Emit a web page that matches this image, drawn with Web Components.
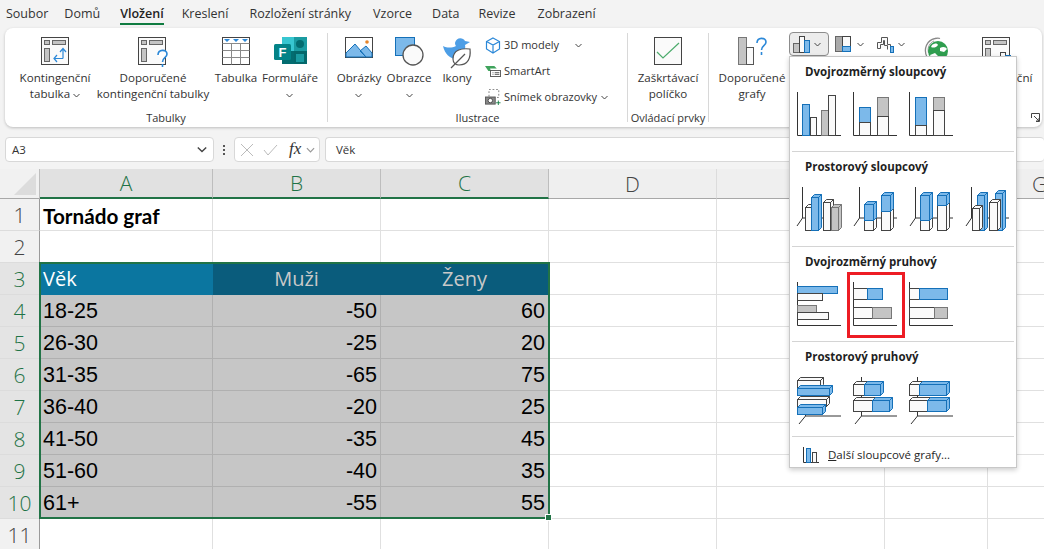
<!DOCTYPE html>
<html lang="cs"><head><meta charset="utf-8"><style>
html,body{margin:0;padding:0;width:1044px;height:549px;overflow:hidden;background:#f3f3f3;font-family:"Open Sans","Noto Sans",sans-serif}
</style></head><body>
<xl-app></xl-app>
<script>
const ui='"Open Sans","Noto Sans",sans-serif';
const chev=(c='#444',w=7,h=5)=>`<svg width="${w}" height="${h}" viewBox="0 0 7 5"><path d="M.5 1 3.500 4 6.500 1" fill="none" stroke="${c}" stroke-width="1"/></svg>`;
const I={
pivot:`<svg width="29" height="29" viewBox="0 0 29 29"><rect x=".5" y=".5" width="27" height="27" fill="#fafafa" stroke="#444"/><rect x="3.500" y="3.500" width="5" height="4" fill="#c4c4c4" stroke="#666"/><rect x="11.500" y="3.500" width="13" height="4" fill="#c4c4c4" stroke="#666"/><rect x="3.500" y="11.500" width="5" height="13" fill="#c4c4c4" stroke="#666"/><path d="M22 21.500H13M16 18l-3 3.500 3 3.500M22 21.500V12M19 15l3-3.500 3 3.500" fill="none" stroke="#2b88d8" stroke-width="1.200"/></svg>`,
rec:`<svg width="30" height="32" viewBox="0 0 30 32"><rect x=".5" y=".5" width="27" height="27" fill="#fafafa" stroke="#444"/><rect x="3.500" y="3.500" width="5" height="4" fill="#c4c4c4" stroke="#666"/><rect x="11.500" y="3.500" width="13" height="4" fill="#c4c4c4" stroke="#666"/><rect x="3.500" y="11.500" width="5" height="13" fill="#c4c4c4" stroke="#666"/><path d="M20 18c0-6 9-6 9-1 0 4-4.500 3.500-4.500 8" fill="#fff" stroke="#2b88d8" stroke-width="1.600"/><path d="M24.500 27v3" stroke="#2b88d8" stroke-width="1.600"/></svg>`,
table:`<svg width="29" height="29" viewBox="0 0 29 29"><rect x=".5" y=".5" width="27" height="27" fill="#fff" stroke="#444"/><path d="M.5 6.500h27M.5 13.500h27M.5 20.500h27M9.500 6.500v21M18.500 6.500v21" stroke="#8a8a8a" fill="none"/><path d="M2 2h6L5 5zM11 2h6l-3 3zM20 2h6l-3 3z" fill="#2b88d8"/></svg>`,
forms:`<svg width="33" height="28" viewBox="0 0 33 28"><rect x="8" y="0" width="13" height="14" fill="#37c6d0"/><rect x="8" y="14" width="13" height="13" fill="#036c70"/><rect x="20" y="0" width="13" height="14" fill="#1a9ba1"/><circle cx="26" cy="7" r="4" fill="#036c70"/><rect x="20" y="14" width="13" height="13" fill="#04686b"/><rect x="22" y="17" width="8" height="8" fill="#1a9ba1"/><rect x="0" y="7" width="17" height="16" rx="1.500" fill="#038387"/><text x="4.500" y="20" font-family="Liberation Sans,sans-serif" font-size="13" font-weight="700" fill="#fff">F</text></svg>`,
pic:`<svg width="28" height="22" viewBox="0 0 28 22"><rect x=".5" y=".5" width="27" height="20" fill="#fff" stroke="#444"/><path d="M1 16 10 7l11 13H1zM15 14l6-5 6 7v4h-6z" fill="#7cb9ea" stroke="#1570b8"/><circle cx="22" cy="5" r="1.800" fill="#e8862a"/></svg>`,
shapes:`<svg width="29" height="29" viewBox="0 0 29 29"><rect x=".5" y=".5" width="19" height="18" fill="#7cb9ea" stroke="#1570b8"/><circle cx="18" cy="18" r="10" fill="#fafafa" stroke="#555" stroke-width="1.300"/></svg>`,
icons:`<svg width="30" height="32" viewBox="0 0 30 32"><path d="M1 9c2 9 7 11 11 13l6-5c4-2 6-5 5-9l5-3-5-1c-2-4-9-4-10 2 0 2 1 3 1 3C10 11 5 11 1 9z" fill="#4d9ee6"/><path d="M28 12c-9-1-17 1-17 10 0 4 3 6 6 6 9 0 12-7 11-16z" fill="#fff" stroke="#555" stroke-width="1.200"/><path d="M9 31 23 17" stroke="#555" stroke-width="1.200"/></svg>`,
d3:`<svg width="16" height="17" viewBox="0 0 16 17"><path d="M8 1 14.500 4.500V12L8 16 1.500 12V4.500zM1.500 4.500 8 8l6.500-3.500M8 8v8" fill="none" stroke="#2b88d8" stroke-width="1.200"/></svg>`,
smart:`<svg width="16" height="12" viewBox="0 0 19 14"><path d="M0 1h11l3 3H6l1 3H4z" fill="#3fa35c"/><rect x="6.500" y="6.500" width="12" height="7" fill="#fff" stroke="#444"/><path d="M9 9h1M9 11h1M11.500 9H17M11.500 11H17" stroke="#444"/></svg>`,
snap:`<svg width="16" height="16" viewBox="0 0 18 18"><rect x="4.500" y=".5" width="11" height="9" fill="none" stroke="#777" stroke-dasharray="2 2"/><rect x=".5" y="9" width="11" height="8" fill="#888" stroke="#555"/><circle cx="6" cy="13" r="2.500" fill="#fff" stroke="#444"/><path d="M15 13v5M12.500 15.500h5" stroke="#107c41"/></svg>`,
check:`<svg width="28" height="28" viewBox="0 0 28 28"><rect x=".5" y=".5" width="27" height="27" fill="#fafafa" stroke="#444"/><path d="M3 15l6 6L25 6" fill="none" stroke="#4cab6c" stroke-width="1.200"/></svg>`,
recchart:`<svg width="29" height="29" viewBox="0 0 29 29"><rect x=".5" y=".5" width="8" height="27" fill="#c4c4c4" stroke="#777"/><rect x="8.500" y="10.500" width="7" height="17" fill="#fafafa" stroke="#555"/><path d="M19 6c0-6 9-6 9-1 0 4-4.500 3.500-4.500 8" fill="none" stroke="#2b88d8" stroke-width="1.600"/><path d="M23.500 15v3" stroke="#2b88d8" stroke-width="1.600"/></svg>`,
col:`<svg width="20" height="17" viewBox="0 0 20 17"><rect x=".5" y="7.500" width="6" height="9" fill="#c4c4c4" stroke="#666"/><rect x="6.500" y=".5" width="5" height="16" fill="#fafafa" stroke="#444"/><rect x="11.500" y="4.500" width="5" height="12" fill="#7cb9ea" stroke="#1570b8"/></svg>`,
hier:`<svg width="17" height="17" viewBox="0 0 17 17"><rect x=".5" y=".5" width="7" height="15" fill="#aaa" stroke="#666"/><rect x="7.500" y=".5" width="8" height="10" fill="#fafafa" stroke="#444"/><rect x="7.500" y="10.500" width="8" height="5" fill="#7cb9ea" stroke="#1570b8"/></svg>`,
water:`<svg width="18" height="17" viewBox="0 0 18 17"><path d="M.5 12.500V6.500h4V1.500h6V8.500h3v3" fill="#fafafa" stroke="#555"/><path d="M.5 12.500h3V8.500h3V4.500h1V9.500h3v4" fill="none" stroke="#555"/><rect x="13.500" y="10.500" width="3" height="6" fill="#7cb9ea" stroke="#1570b8"/></svg>`,
globe:`<svg width="25" height="25" viewBox="0 0 25 25"><path d="M3 20C-1 12 3 3 11 1.500c2-.5 4-.5 5 0" fill="none" stroke="#888" stroke-width="1.300"/><path d="M4.500 16C3 10 6 5.500 10 4" fill="none" stroke="#999"/><circle cx="14" cy="14" r="10" fill="#2f9e4f"/><path d="M8 8c3-2 5-2 6 0-2 3-5 3-7 2zM16 11c3-2 6-1 7 1l-3 3-4-1zM6 18l5-2 3 3-2 4c-3 0-5-2-6-5zM17 20l3-1 0 3-3 1z" fill="#fff"/></svg>`,
pivotchart:`<svg width="30" height="30" viewBox="0 0 30 30"><rect x=".5" y=".5" width="27" height="27" fill="#fafafa" stroke="#444"/><rect x="3.500" y="3.500" width="5" height="4" fill="#c4c4c4" stroke="#666"/><rect x="11.500" y="3.500" width="13" height="4" fill="#c4c4c4" stroke="#666"/><rect x="3.500" y="11.500" width="5" height="13" fill="#c4c4c4" stroke="#666"/><rect x="18.500" y="15.500" width="5" height="12" fill="#fafafa" stroke="#444"/><rect x="23.500" y="18.500" width="5" height="9" fill="#7cb9ea" stroke="#1570b8"/></svg>`
};
const B='#7cb9ea',BS='#1570b8',G='#c4c4c4',GS='#777',W='#fafafa',WS='#444';
const r=(x,y,w,h,f,s)=>`<rect x="${x+.5}" y="${y+.5}" width="${w}" height="${h}" fill="${f}" stroke="${s}"/>`;
const ax2=`<path d="M.5 0V43.500H44" fill="none" stroke="#333"/>`;
const ch=(s)=>`<svg width="46" height="44" viewBox="0 0 46 44" style="display:block;overflow:visible">${s}</svg>`;
const bx=(x,y,w,h,f,s,d=3)=>{x+=.5;y+=.5;return `<path d="M${x} ${y}l${d} ${-d}h${w}l${-d} ${d}z" fill="${f}" stroke="${s}"/><path d="M${x+w} ${y}l${d} ${-d}v${h}l${-d} ${d}z" fill="${f}" stroke="${s}"/><rect x="${x}" y="${y}" width="${w}" height="${h}" fill="${f}" stroke="${s}"/>`};
const axC=(x)=>`<path d="M${x+.5} 0V31H${x+38}M${x+.5} 31 ${x-5} 39" fill="none" stroke="#333"/>`;
const axB=(x)=>`<path d="M${x+.5} 0V39H44M${x+.5} 39 ${x-6} 47" fill="none" stroke="#333"/>`;
const thumbs={
c2:[ch(ax2+r(5,12,7,31,B,BS)+r(13,25,6,18,W,WS)+r(24,18,7,25,G,GS)+r(31,3,7,40,W,WS)),
 ch(ax2+r(6,15,11,15,B,BS)+r(6,30,11,13,W,WS)+r(24,5,11,19,G,GS)+r(24,24,11,19,W,WS)),
 ch(ax2+r(6,5,11,28,B,BS)+r(6,33,11,10,W,WS)+r(24,5,11,13,G,GS)+r(24,18,11,25,W,WS))],
c3:[ch(axC(5)+bx(8,20,6,23,W,WS)+bx(14,10,7,33,B,BS)+bx(26,15,7,28,W,WS)+bx(34,20,7,23,G,GS)),
 ch(axC(6)+bx(11,33,9,10,W,WS)+bx(11,17,9,16,B,BS)+bx(28,24,9,19,W,WS)+bx(28,8,9,16,B,BS)),
 ch(axC(6)+bx(11,33,9,10,W,WS)+bx(11,8,9,25,B,BS)+bx(28,18,9,25,W,WS)+bx(28,8,9,10,B,BS)),
 ch(axC(6)+bx(12,8,7,35,B,BS)+bx(30,6,7,37,B,BS)+bx(7,21,7,22,W,WS)+bx(24,15,8,28,W,WS))],
b2:[ch(ax2+r(0,4,40,7,B,BS)+r(0,11,25,7,W,WS)+r(0,23,19,7,G,GS)+r(0,30,31,7,W,WS)),
 ch(ax2+r(0,6,14,11,W,WS)+r(14,6,15,11,B,BS)+r(0,25,19,11,W,WS)+r(19,25,19,11,G,GS)),
 ch(ax2+r(0,6,10,11,W,WS)+r(10,6,28,11,B,BS)+r(0,25,25,11,W,WS)+r(25,25,13,11,G,GS))],
b3:[ch(axB(8)+bx(0,3,23,7,W,WS)+bx(0,11,32,7,B,BS)+bx(0,22,29,7,W,WS)+bx(0,30,25,7,B,BS)),
 ch(axB(8)+bx(0,7,11,11,W,WS)+bx(11,7,16,11,B,BS)+bx(0,23,19,11,W,WS)+bx(19,23,17,11,B,BS)),
 ch(axB(8)+bx(0,7,10,11,W,WS)+bx(10,7,27,11,B,BS)+bx(0,23,18,11,W,WS)+bx(18,23,19,11,B,BS))]
};
class Base extends HTMLElement{
 constructor(){super();this.attachShadow({mode:'open'});}
 set html(v){this.shadowRoot.innerHTML=v;}
}
class XlTabs extends Base{connectedCallback(){
 const t=['Soubor','Domů','Vložení','Kreslení','Rozložení stránky','Vzorce','Data','Revize','Zobrazení'];
 const m=[16,20,18,21,22,20,19,22,0];
 this.html=`<style>:host{display:flex;flex:none;height:28px;padding-left:6px;font:12.500px ${ui};color:#333;box-sizing:border-box}
 span{display:block;line-height:27px;position:relative;white-space:nowrap}
 .on{font-weight:600;color:#222}.on::after{content:"";position:absolute;left:0;right:0;top:23px;height:2px;background:#107c41}</style>`+
 t.map((x,i)=>`<span class="${i==2?'on':''}" style="margin-right:${m[i]}px">${x}</span>`).join('');
}}
class XlBtn extends Base{connectedCallback(){
 const w=this.getAttribute('w')||60,pl=this.getAttribute('pl')||0;
 this.html=`<style>:host{display:flex;flex-direction:column;align-items:center;box-sizing:border-box;width:${w}px;padding-left:${pl}px;flex:none;font:11.600px/16px ${ui};color:#333;text-align:center;white-space:nowrap}
 .i{height:33px;margin-top:5px;display:flex;align-items:flex-start;justify-content:center}
 </style><div class="i"><slot name="i"></slot></div><div><slot></slot></div>`;
}}
class XlGroup extends Base{connectedCallback(){
 const launcher=this.hasAttribute('launcher')?`<svg style="position:absolute;right:2px;bottom:4px" width="9" height="9" viewBox="0 0 9 9"><path d="M.5 5V.5H8.500V8.500H5M3 3l5 5M8 5v3H5" fill="none" stroke="#444"/></svg>`:'';
 this.html=`<style>:host{display:flex;flex-direction:column;flex:none;position:relative;height:94px;width:${this.getAttribute('w')}px;box-sizing:border-box;margin-top:4px;font:11px/16px ${ui};color:#333}
 :host(:not([nob]))::after{content:"";position:absolute;right:0;top:1px;bottom:4px;width:1px;background:#d8d8d8}
 .c{display:flex;flex:1;padding-left:${this.getAttribute('pl')||0}px;min-height:0}.l{text-align:center;height:16px;white-space:nowrap;padding-right:1px}</style>
 <div class="c"><slot></slot></div><div class="l">${this.getAttribute('label')||''}</div>${launcher}`;
}}
class XlRibbon extends Base{connectedCallback(){
 const c=chev();
 const ic=k=>`<span slot="i">${I[k]}</span>`;
 this.html=`<style>:host{display:flex;flex:none;margin:0 2px 0 5px;height:99px;background:#fff;border-radius:8px;box-shadow:0 1px 3px rgba(0,0,0,.22);font:11.600px/16px ${ui};color:#333}
 .mini{display:flex;flex-direction:column;gap:8px;margin-top:4px;width:140px;flex:none;padding-left:2px}.m{display:flex;align-items:center;height:18px;white-space:nowrap}
 .w{width:19px;flex:none;display:flex;align-items:center}
 .smb{height:24px;box-sizing:border-box;display:flex;align-items:center;border-radius:4px;flex:none;padding-left:6px}
 .smb.on{background:#ececec;border:1px solid #8c8c8c;padding-left:3px}</style>
 <xl-group w="323" label="Tabulky" pl="10">
  <xl-btn w="80">${ic('pivot')}Kontingenční<br>tabulka ${c}</xl-btn>
  <xl-btn w="116">${ic('rec')}Doporučené<br>kontingenční tabulky</xl-btn>
  <xl-btn w="50">${ic('table')}Tabulka</xl-btn>
  <xl-btn w="58">${ic('forms')}Formuláře<br>${c}</xl-btn>
 </xl-group>
 <xl-group w="300" label="Ilustrace" pl="3">
  <xl-btn w="56">${ic('pic')}Obrázky<br>${c}</xl-btn>
  <xl-btn w="44">${ic('shapes')}Obrazce<br>${c}</xl-btn>
  <xl-btn w="52">${ic('icons')}Ikony</xl-btn>
  <div class="mini">
   <div class="m"><span class="w">${I.d3}</span><span>3D modely</span><span style="margin-left:16px;display:flex">${c}</span></div>
   <div class="m"><span class="w">${I.smart}</span><span>SmartArt</span></div>
   <div class="m"><span class="w">${I.snap}</span><span style="margin-right:4px">Snímek obrazovky</span>${c}</div>
  </div>
 </xl-group>
 <xl-group w="81" label="Ovládací prvky">
  <xl-btn w="80">${ic('check')}Zaškrtávací<br>políčko</xl-btn>
 </xl-group>
 <xl-group w="333" nob launcher>
  <xl-btn w="80" pl="6">${ic('recchart')}Doporučené<br>grafy</xl-btn>
  <div class="smb on" style="width:40px">${I.col}<span style="margin-left:1px;display:flex">${c}</span></div>
  <div class="smb" style="width:42px">${I.hier}<span style="margin-left:5px;display:flex">${c}</span></div>
  <div class="smb" style="width:44px">${I.water}<span style="margin-left:3px;display:flex">${c}</span></div>
  <div style="width:25px;margin:5px 0 0 9px;flex:none">${I.globe}</div>
  <xl-btn w="80" style="margin-left:8px">${ic('pivotchart')}Kontingenční<br>graf</xl-btn>
 </xl-group>`;
}}
class XlFormula extends Base{connectedCallback(){
 this.html=`<style>:host{display:flex;flex:none;align-items:center;height:25px;margin:10px 0 7px 5px;font:11.500px ${ui};color:#333}
 .b{background:#fff;border:1px solid #d8d8d8;border-radius:4px;height:25px;box-sizing:border-box;display:flex;align-items:center;flex:none}
 .n{width:209px;padding:0 6px;justify-content:space-between}.dots{width:20px;flex:none}
 .dots i{display:block;width:2px;height:2px;background:#555;margin:2px auto}
 .f{width:86px;padding-left:5px}.v{flex:1;margin-left:5px;padding-left:10px;border-right:0;min-width:0}
 .fx{font:italic 400 17px "Liberation Serif",serif;color:#333;margin:0 5px 2px 11px;line-height:20px}</style>
 <div class="b n"><span>A3</span>${chev('#444',10,7)}</div>
 <div class="dots"><i></i><i></i><i></i></div>
 <div class="b f"><svg width="14" height="14" viewBox="0 0 14 14"><path d="M1 1l12 12M13 1 1 13" stroke="#bbb" fill="none"/></svg><svg style="margin-left:9px" width="15" height="12" viewBox="0 0 15 12"><path d="M1 6l4 5 9-10" stroke="#bbb" fill="none"/></svg><span class="fx">fx</span>${chev('#999',9,6)}</div>
 <div class="b v">Věk</div>`;
}}
class XlCell extends Base{connectedCallback(){
 this.html=`<style>:host{display:flex;align-items:center;box-sizing:border-box;padding:2px 3px 0;border-right:1px solid #e0e0e0;border-bottom:1px solid #e0e0e0;font:21.500px "Liberation Sans",sans-serif;color:#000;white-space:nowrap;min-width:0;background:#fff;overflow:hidden}
 :host([sel]){background:#c6c6c6;border-color:#b0b0b0}
 :host([r]){justify-content:flex-end}:host([cen]){justify-content:center}
 :host([hd]){font:20px ${ui};background:#0b76a0;color:#fff;border-color:#0b76a0;padding-top:0;box-shadow:inset 0 1px #fff}
 :host([hd2]){font:20px ${ui};background:#0a5c7c;color:#c9c9c9;border-color:#0a5c7c;padding-top:0;box-shadow:inset 0 1px #fff}
 :host([b]){font:700 20.700px "Lato","Open Sans",sans-serif}</style><slot></slot>`;
}}
class XlHead extends Base{connectedCallback(){
 this.html=`<style>:host{display:flex;align-items:center;justify-content:center;box-sizing:border-box;color:#444;font:21px ${ui};font-weight:300}
 :host([col]){background:#efefef;border-right:1px solid #dcdcdc;border-bottom:1px solid #a8a8a8}
 :host([row]){background:#f1f1f1;border-right:1px solid #9a9a9a;border-bottom:1px solid #dcdcdc}
 :host([a]){background:#e4e4e4;color:#1f7346}
 :host([ac]){background:#e1e1e1;margin-top:0;border-right:1px solid #bdbdbd;border-bottom:2px solid #217346;padding-top:0}
 :host([corner]){background:#f1f1f1;border-right:1px solid #bdbdbd;border-bottom:1px solid #a8a8a8;align-items:flex-start;justify-content:flex-start}svg{display:block}</style><slot></slot>`;
}}
class XlSheet extends Base{connectedCallback(){
 const data=[['18-25','-50','60'],['26-30','-25','20'],['31-35','-65','75'],['36-40','-20','25'],['41-50','-35','45'],['51-60','-40','35'],['61+','-55','55']];
 const cols=['A','B','C','D','E','F','G'];
 let h=`<xl-head corner><svg style="margin:4px 0 0 14px" width="22" height="22" viewBox="0 0 22 22"><path d="M22 0V22H0z" fill="#dcdcdc"/></svg></xl-head>`;
 cols.forEach((c,i)=>{h+=`<xl-head col ${i<3?'a ac':''}>${c}</xl-head>`});
 const blank=n=>'<xl-cell></xl-cell>'.repeat(n);
 for(let r=1;r<=11;r++){
  const act=r>=3&&r<=10;
  h+=`<xl-head row ${act?'a':''}>${r}</xl-head>`;
  if(r==1)h+=`<xl-cell b>Tornádo graf</xl-cell>`+blank(6);
  else if(r==3)h+=`<xl-cell hd>Věk</xl-cell><xl-cell hd2 cen>Muži</xl-cell><xl-cell hd2 cen>Ženy</xl-cell>`+blank(4);
  else if(r>=4&&r<=10){const d=data[r-4];h+=`<xl-cell sel>${d[0]}</xl-cell><xl-cell sel r>${d[1]}</xl-cell><xl-cell sel r>${d[2]}</xl-cell>`+blank(4);}
  else h+=blank(7);
 }
 this.html=`<style>:host{display:grid;flex:none;position:relative;grid-template-columns:40px 173px 168px 168px 168px 168px 103px 104px;grid-template-rows:30px repeat(11,32px);background:#fff;width:1092px}
 .sel{position:absolute;left:39px;top:93px;width:511px;height:257px;box-sizing:border-box;border:2px solid #217346;pointer-events:none}
 .sel::after{content:"";position:absolute;right:-4px;bottom:-4px;width:5px;height:5px;background:#217346;border:1px solid #fff}</style>${h}<div class="sel"></div>`;
}}
class XlGallery extends Base{connectedCallback(){
 const g=(t,k,sel)=>`<section><h4>${t}</h4><div class="g">${thumbs[k].map((x,i)=>`<div class="${i==sel?'hit':''}">${x}</div>`).join('')}</div></section>`;
 this.html=`<style>:host{position:absolute;left:789px;top:56px;width:228px;height:412px;box-sizing:border-box;background:#fff;border:1px solid #c8c8c8;box-shadow:0 2px 5px rgba(0,0,0,.2);font:11.500px ${ui};color:#262626;display:flex;flex-direction:column}
 section{height:95px;box-sizing:border-box;border-bottom:1px solid #d4d4d4;padding:7px 0 0 5px;margin:0 2px;flex:none}
 h4{margin:0 0 0 8px;font:700 11.500px/16px ${ui};color:#1f1f1f}
 .g{display:flex;gap:10px;margin-top:12px}.g>div{width:46px;height:44px;position:relative}
 .hit::after{content:"";position:absolute;left:-6px;top:-10px;width:58px;height:66px;box-sizing:border-box;border:3px solid #ed1c24}
 .more{display:flex;align-items:center;gap:9px;padding:5px 0 0 13px;height:30px;box-sizing:border-box}</style>
 ${g('Dvojrozměrný sloupcový','c2',-1)}${g('Prostorový sloupcový','c3',-1)}${g('Dvojrozměrný pruhový','b2',1)}${g('Prostorový pruhový','b3',-1)}
 <div class="more"><svg width="16" height="16" viewBox="0 0 16 16"><path d="M.5 0V15.500H16" fill="none" stroke="#333"/><rect x="3.500" y="1.500" width="4" height="14" fill="#7cb9ea" stroke="#1570b8"/><rect x="9.500" y="5.500" width="4" height="10" fill="#fafafa" stroke="#444"/></svg><span><u>D</u>alší sloupcové grafy...</span></div>`;
}}
class XlApp extends Base{connectedCallback(){
 this.html=`<style>:host{display:flex;flex-direction:column;position:relative;width:1044px;height:549px;overflow:hidden;background:#f3f3f3}</style>
 <xl-tabs></xl-tabs><xl-ribbon></xl-ribbon><xl-formula></xl-formula><xl-sheet></xl-sheet><xl-gallery></xl-gallery>`;
}}
for(const [n,c] of [['xl-tabs',XlTabs],['xl-btn',XlBtn],['xl-group',XlGroup],['xl-ribbon',XlRibbon],['xl-formula',XlFormula],['xl-cell',XlCell],['xl-head',XlHead],['xl-sheet',XlSheet],['xl-gallery',XlGallery],['xl-app',XlApp]])customElements.define(n,c);
</script></body></html>
